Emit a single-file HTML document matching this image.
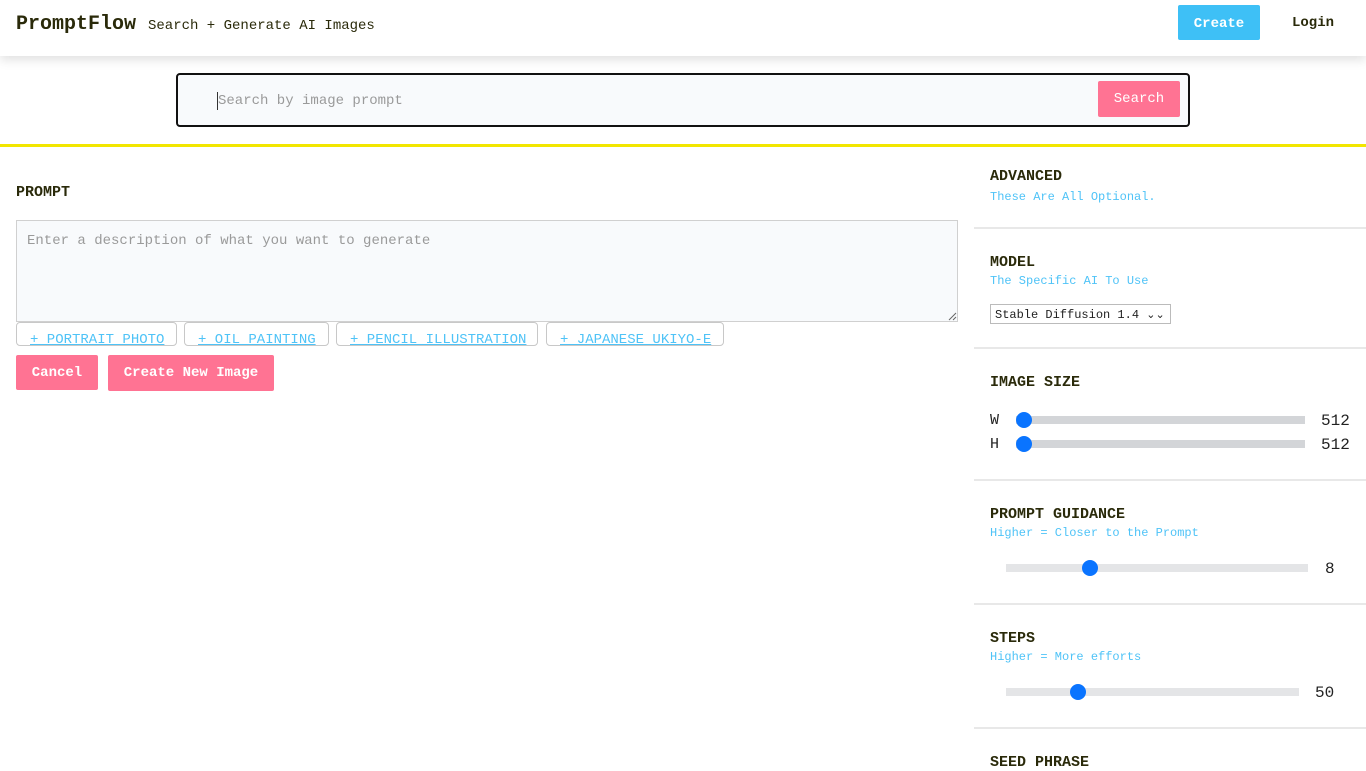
<!DOCTYPE html>
<html><head><meta charset="utf-8"><style>
*{box-sizing:border-box;margin:0;padding:0}
body{width:1366px;height:768px;overflow:hidden;background:#fff;font-family:"Liberation Mono",monospace;color:#2a2a0a;position:relative}
.a{position:absolute;white-space:nowrap}
.hdr{position:absolute;left:0;top:0;width:1366px;height:56px;background:#fff;box-shadow:0 4px 10px rgba(0,0,0,.12)}
.h{font-weight:bold;font-size:15px;color:#2a2a0a}
.s{font-size:12px;color:#4fc3f7}
.line{position:absolute;left:974px;width:392px;height:2px;background:#e8e8e8}
.track{position:absolute;height:8px;background:#d3d5d8;border-radius:0}
.thumb{position:absolute;width:16px;height:16px;border-radius:50%;background:#0a74ff}
.chip{position:absolute;top:322px;height:24px;border:1px solid #c8c8c8;border-radius:4px;color:#4fc3f7;font-size:14px;text-decoration:underline;padding:9px 0 0 13px;overflow:hidden;line-height:16px}
.pb{position:absolute;background:#ff7393;color:#fff;font-weight:bold;font-size:14px;border-radius:2px;text-align:center}
.num{font-size:16px;color:#222}
</style></head><body>
<div class="hdr"></div>
<div class="a" style="left:16px;top:13px;font-size:20px;font-weight:bold;color:#2a2a0a">PromptFlow</div>
<div class="a" style="left:148px;top:18px;font-size:14px;color:#2a2a0a">Search + Generate AI Images</div>
<div class="a" style="left:1178px;top:5px;width:82px;height:35px;background:#3ec0f6;border-radius:2px;color:#fff;font-weight:bold;font-size:14px;text-align:center;line-height:38px">Create</div>
<div class="a" style="left:1292px;top:15px;font-size:14px;font-weight:bold;color:#2a2a0a">Login</div>

<div class="a" style="left:176px;top:73px;width:1014px;height:54px;border:2px solid #111;border-radius:4px;background:#f8fafc"></div>
<div class="a" style="left:217px;top:92px;width:1px;height:18px;background:#333"></div>
<div class="a" style="left:218px;top:93px;font-size:14px;color:#9a9a9a">Search by image prompt</div>
<div class="pb" style="left:1098px;top:81px;width:82px;height:36px;line-height:37px;font-weight:normal">Search</div>

<div class="a" style="left:0;top:144px;width:1366px;height:3px;background:#f2e600"></div>

<div class="a h" style="left:16px;top:184px">PROMPT</div>
<div class="a" style="left:16px;top:220px;width:942px;height:102px;border:1px solid #d0d0d0;background:#f8fafc"></div>
<div class="a" style="left:27px;top:233px;font-size:14px;color:#9a9a9a">Enter a description of what you want to generate</div>
<svg class="a" style="left:947px;top:311px" width="10" height="10"><path d="M2 9L9 2M6 9L9 6" stroke="#666" stroke-width="1"/></svg>

<div class="chip" style="left:16px;width:161px">+ PORTRAIT PHOTO</div>
<div class="chip" style="left:184px;width:145px">+ OIL PAINTING</div>
<div class="chip" style="left:336px;width:202px">+ PENCIL ILLUSTRATION</div>
<div class="chip" style="left:546px;width:178px">+ JAPANESE UKIYO-E</div>

<div class="pb" style="left:16px;top:355px;width:82px;height:35px;line-height:37px">Cancel</div>
<div class="pb" style="left:108px;top:355px;width:166px;height:36px;line-height:37px">Create New Image</div>

<div class="a h" style="left:990px;top:168px">ADVANCED</div>
<div class="a s" style="left:990px;top:190px">These Are All Optional.</div>
<div class="line" style="top:227px"></div>

<div class="a h" style="left:990px;top:254px">MODEL</div>
<div class="a s" style="left:990px;top:274px">The Specific AI To Use</div>
<div class="a" style="left:990px;top:304px;width:181px;height:20px;border:1px solid #bbb;font-size:12px;color:#222;padding:3px 0 0 4px">Stable Diffusion 1.4 <span style="font-size:11px">⌄⌄</span></div>
<div class="line" style="top:347px"></div>

<div class="a h" style="left:990px;top:374px">IMAGE SIZE</div>
<div class="a num" style="left:990px;top:412px;font-size:15px">W</div>
<div class="track" style="left:1016px;top:416px;width:289px"></div>
<div class="thumb" style="left:1016px;top:412px"></div>
<div class="a num" style="left:1321px;top:412px">512</div>
<div class="a num" style="left:990px;top:436px;font-size:15px">H</div>
<div class="track" style="left:1016px;top:440px;width:289px"></div>
<div class="thumb" style="left:1016px;top:436px"></div>
<div class="a num" style="left:1321px;top:436px">512</div>
<div class="line" style="top:479px"></div>

<div class="a h" style="left:990px;top:506px">PROMPT GUIDANCE</div>
<div class="a s" style="left:990px;top:526px">Higher = Closer to the Prompt</div>
<div class="track" style="left:1006px;top:564px;width:302px;background:#e4e5e7"></div>
<div class="thumb" style="left:1082px;top:560px"></div>
<div class="a num" style="left:1325px;top:560px">8</div>
<div class="line" style="top:603px"></div>

<div class="a h" style="left:990px;top:630px">STEPS</div>
<div class="a s" style="left:990px;top:650px">Higher = More efforts</div>
<div class="track" style="left:1006px;top:688px;width:293px;background:#e4e5e7"></div>
<div class="thumb" style="left:1070px;top:684px"></div>
<div class="a num" style="left:1315px;top:684px">50</div>
<div class="line" style="top:727px"></div>

<div class="a h" style="left:990px;top:754px">SEED PHRASE</div>
</body></html>
